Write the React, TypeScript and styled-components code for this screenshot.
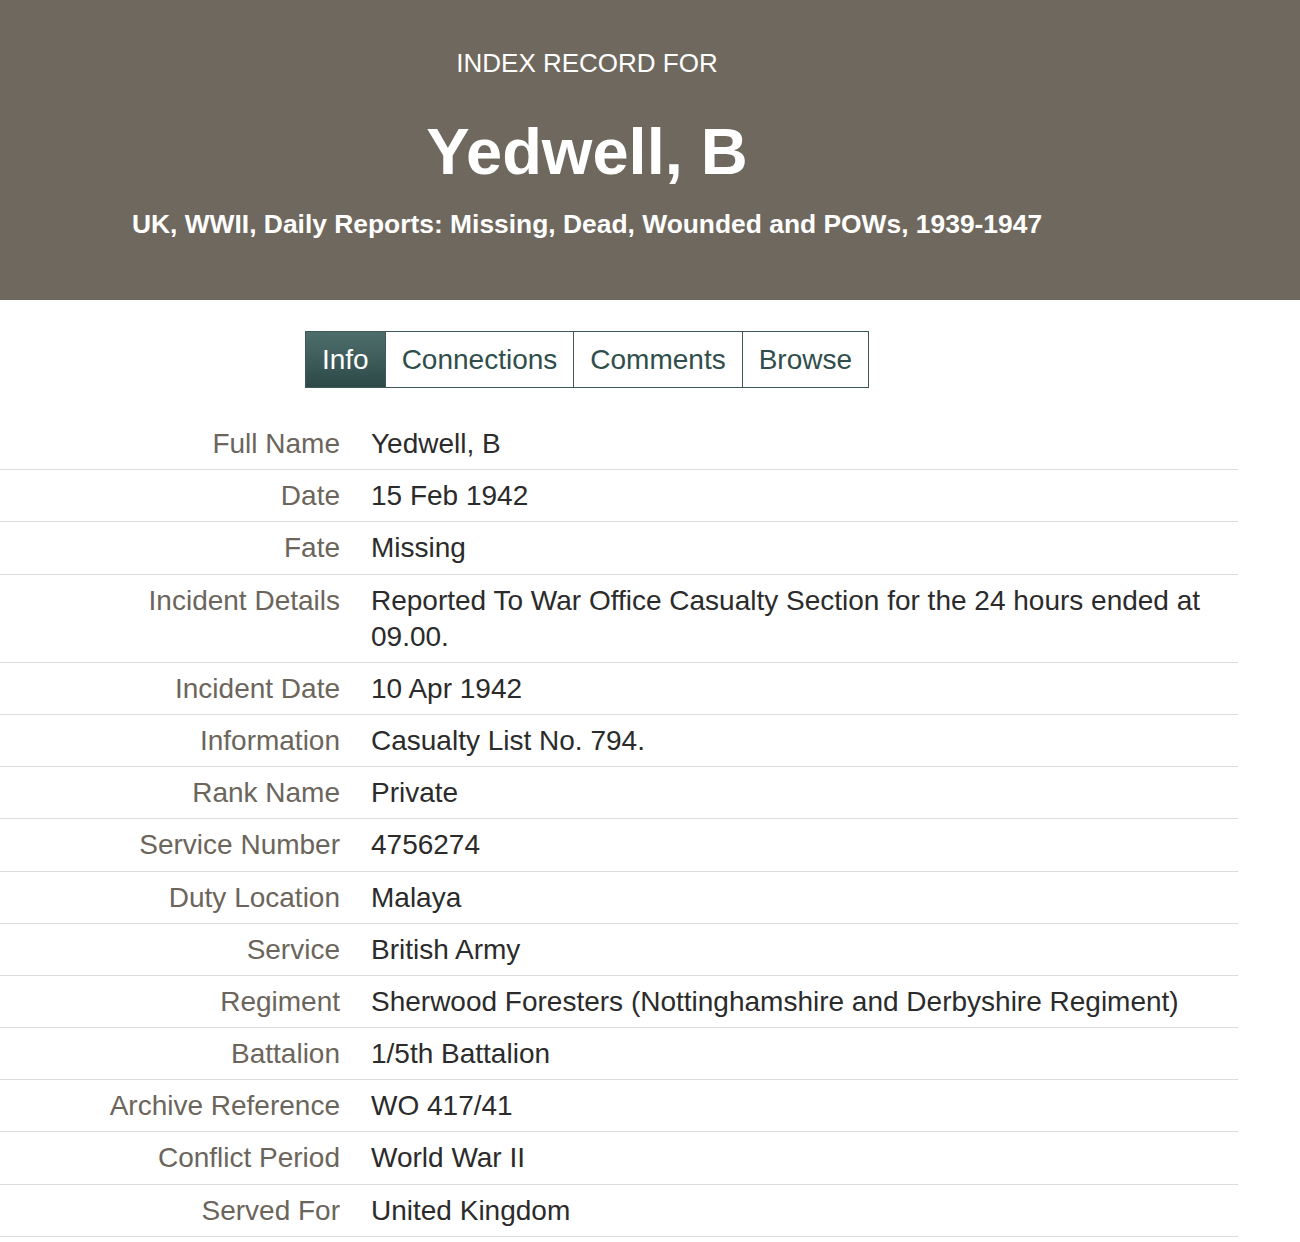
import React from "react";
import styled, { createGlobalStyle } from "styled-components";

const GlobalStyle = createGlobalStyle`
  html, body {
    margin: 0;
    padding: 0;
    background: #ffffff;
  }
  body {
    font-family: "Liberation Sans", Arial, Helvetica, sans-serif;
    color: #2b2b2b;
  }
`;

const Page = styled.div`
  width: 1300px;
`;

const Banner = styled.header`
  background: #6f685e;
  height: 300px;
  box-sizing: border-box;
  padding-top: 47px;
  color: #ffffff;
`;

const BannerInner = styled.div`
  width: 1174px;
  display: flex;
  flex-direction: column;
  align-items: center;
  text-align: center;
`;

const Kicker = styled.div`
  font-size: 26px;
  line-height: 32px;
  font-weight: 400;
`;

const Title = styled.h1`
  margin: 37px 0 0;
  font-size: 65px;
  line-height: 72px;
  font-weight: 700;
`;

const Subtitle = styled.div`
  margin-top: 19px;
  font-size: 26.4px;
  line-height: 34px;
  font-weight: 700;
`;

const Main = styled.main`
  width: 1238px;
  padding-top: 31px;
`;

const TabBar = styled.nav`
  width: 1174px;
  display: flex;
  justify-content: center;
`;

const TabGroup = styled.div`
  display: flex;
  border: 1.5px solid #3e5957;
`;

const Tab = styled.button<{ $active?: boolean }>`
  appearance: none;
  margin: 0;
  font-family: inherit;
  font-size: 28px;
  line-height: 55px;
  padding: 0 16px;
  border: none;
  border-left: ${(p) => (p.$active ? "none" : "1.5px solid #3e5957")};
  color: ${(p) => (p.$active ? "#ffffff" : "#2f4e4c")};
  background: ${(p) =>
    p.$active ? "linear-gradient(#4e6e6c, #2c4948)" : "#ffffff"};
  cursor: pointer;
  &:first-child {
    border-left: none;
  }
`;

const Table = styled.dl`
  margin: 30px 0 0;
`;

const Row = styled.div`
  display: grid;
  grid-template-columns: 340px 1fr;
  border-bottom: 1px solid #dcdcdc;
  padding: 8px 0 7.2px;
  font-size: 28px;
  line-height: 36px;
`;

const Label = styled.dt`
  text-align: right;
  color: #6b655c;
`;

const Value = styled.dd`
  margin: 0;
  padding-left: 31px;
  padding-right: 30px;
  color: #2b2b2b;
`;

const fields: [string, string][] = [
  ["Full Name", "Yedwell, B"],
  ["Date", "15 Feb 1942"],
  ["Fate", "Missing"],
  [
    "Incident Details",
    "Reported To War Office Casualty Section for the 24 hours ended at 09.00.",
  ],
  ["Incident Date", "10 Apr 1942"],
  ["Information", "Casualty List No. 794."],
  ["Rank Name", "Private"],
  ["Service Number", "4756274"],
  ["Duty Location", "Malaya"],
  ["Service", "British Army"],
  ["Regiment", "Sherwood Foresters (Nottinghamshire and Derbyshire Regiment)"],
  ["Battalion", "1/5th Battalion"],
  ["Archive Reference", "WO 417/41"],
  ["Conflict Period", "World War II"],
  ["Served For", "United Kingdom"],
];

const tabs = ["Info", "Connections", "Comments", "Browse"];

export default function App() {
  return (
    <Page>
      <GlobalStyle />
      <Banner>
        <BannerInner>
          <Kicker>INDEX RECORD FOR</Kicker>
          <Title>Yedwell, B</Title>
          <Subtitle>
            UK, WWII, Daily Reports: Missing, Dead, Wounded and POWs, 1939-1947
          </Subtitle>
        </BannerInner>
      </Banner>
      <Main>
        <TabBar>
          <TabGroup>
            {tabs.map((t, i) => (
              <Tab key={t} $active={i === 0}>
                {t}
              </Tab>
            ))}
          </TabGroup>
        </TabBar>
        <Table>
          {fields.map(([k, v]) => (
            <Row key={k}>
              <Label>{k}</Label>
              <Value>{v}</Value>
            </Row>
          ))}
        </Table>
      </Main>
    </Page>
  );
}
